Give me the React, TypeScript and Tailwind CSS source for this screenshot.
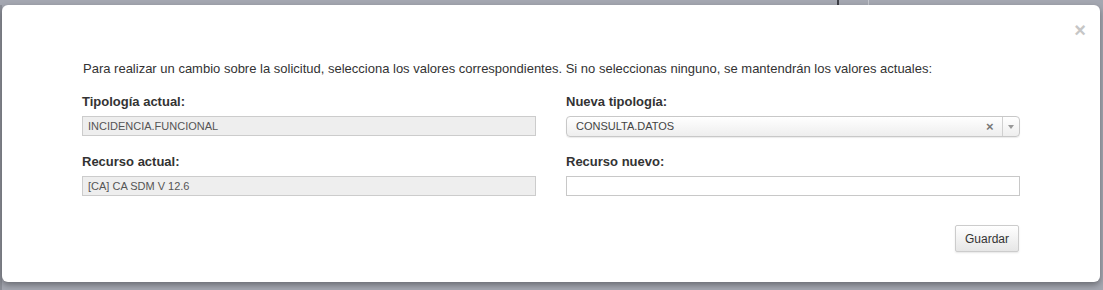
import React from 'react';

const font = { fontFamily: '"Liberation Sans", Arial, sans-serif' };

const ReadOnlyField: React.FC<{ label: string; value: string }> = ({ label, value }) => (
  <div className="flex flex-col">
    <label className="text-[13px] font-bold text-[#333] leading-[16px] mb-[6px]">{label}</label>
    <div className="h-[20px] border border-[#cccccc] bg-[#eeeeee] px-[5px] text-[11px] leading-[18px] text-[#555]">
      {value}
    </div>
  </div>
);

const App: React.FC = () => {
  return (
    <div className="relative w-[1103px] h-[290px] bg-[#a4a7b1] overflow-hidden" style={font}>
      {/* page behind the overlay */}
      <div className="absolute left-[837px] top-0 h-[6px] w-[2px] bg-[#3d3f46]" />
      <div className="absolute left-[868px] top-0 h-[6px] w-[1px] bg-[#c4c6cc]" />
      <div className="absolute left-0 top-[5px] h-[285px] w-[2px] bg-[#8b8e97]" />

      <div className="relative ml-[2px] mt-[5px] w-[1098px] h-[277px] bg-white rounded-[6px] shadow-[0_3px_6px_rgba(0,0,0,0.35)]">
        <button className="absolute right-[14px] top-[15px] text-[#c6c6c6] text-[20px] font-bold leading-none">×</button>

        <div className="pt-[57px] px-[80px]">
          <p className="text-[13px] text-[#333] leading-[14px] mb-[18px] pl-[1px]">
            Para realizar un cambio sobre la solicitud, selecciona los valores correspondientes. Si no seleccionas ninguno, se mantendrán los valores actuales:
          </p>

          <div className="grid grid-cols-[454px_454px] gap-x-[30px] gap-y-[17px]">
            <ReadOnlyField label="Tipología actual:" value="INCIDENCIA.FUNCIONAL" />

            <div className="flex flex-col">
              <label className="text-[13px] font-bold text-[#333] leading-[16px] mb-[6px]">Nueva tipología:</label>
              <div className="flex h-[21px] rounded-[4px] border border-[#c8c8c8] bg-gradient-to-b from-white to-[#eeeeee] shadow-[0_1px_1px_rgba(0,0,0,0.08)]">
                <span className="flex-1 pl-[9px] text-[11px] leading-[19px] text-[#444]">CONSULTA.DATOS</span>
                <span className="w-[16px] text-[13px] font-bold leading-[19px] text-[#777]">×</span>
                <span className="w-[17px] border-l border-[#d0d0d0] flex items-center justify-center">
                  <svg width="6" height="4" viewBox="0 0 6 4">
                    <path d="M0 0 L6 0 L3 4 Z" fill="#999" />
                  </svg>
                </span>
              </div>
            </div>

            <ReadOnlyField label="Recurso actual:" value="[CA] CA SDM V 12.6" />

            <div className="flex flex-col">
              <label className="text-[13px] font-bold text-[#333] leading-[16px] mb-[6px]">Recurso nuevo:</label>
              <input className="h-[20px] border border-[#c8c8c8] bg-white px-[5px] text-[11px] outline-none" />
            </div>
          </div>

          <div className="flex justify-end mt-[29px] pr-[1px] w-[938px]">
            <button className="h-[27px] w-[64px] rounded-[2px] border border-[#cccccc] bg-gradient-to-b from-white to-[#e6e6e6] text-[12px] text-[#333] shadow-[0_1px_2px_rgba(0,0,0,0.1)]">
              Guardar
            </button>
          </div>
        </div>
      </div>
    </div>
  );
};

export default App;
